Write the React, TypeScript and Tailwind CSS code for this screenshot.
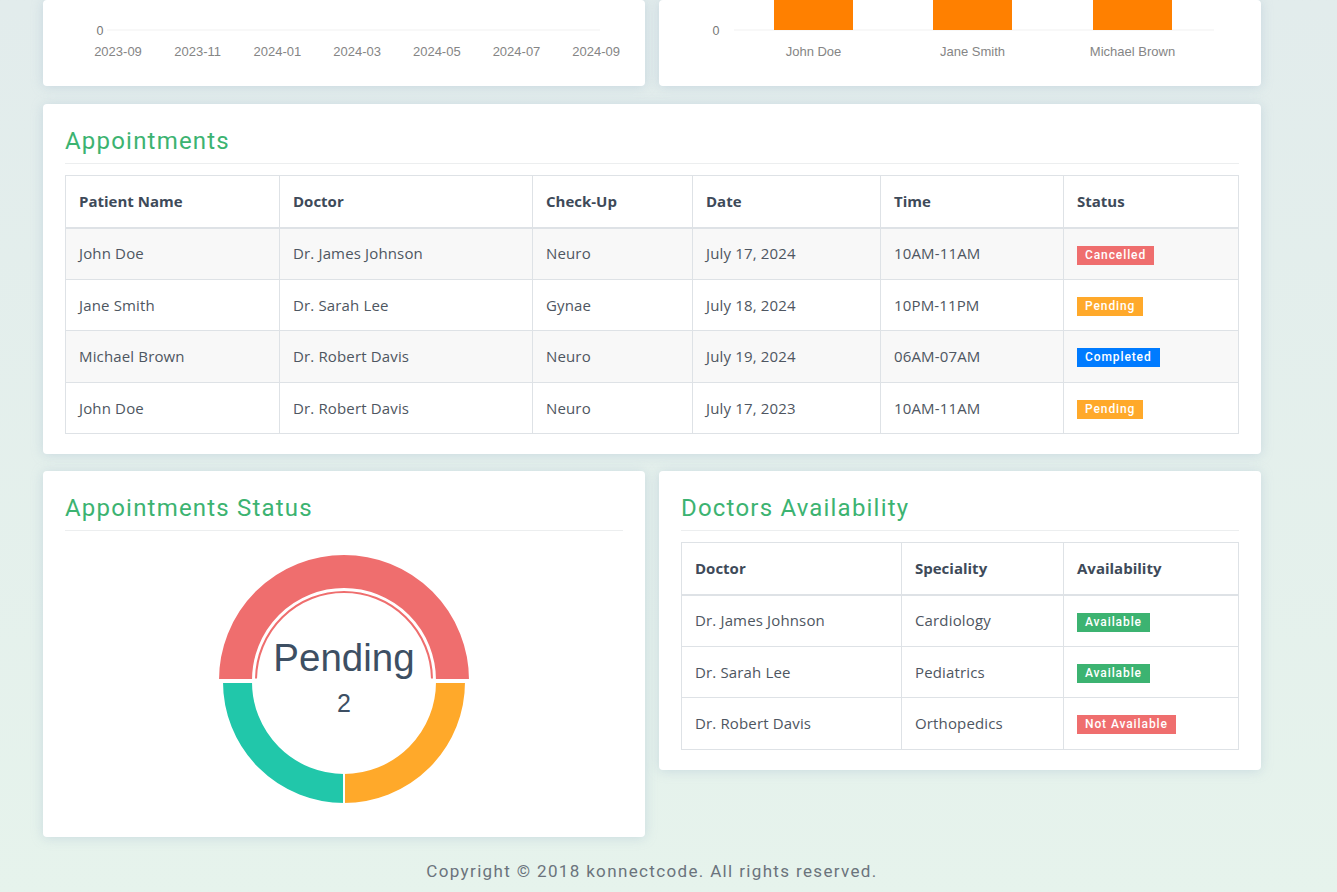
import React from "react";

const card = "bg-white rounded-[4px] shadow-[0_1px_12px_rgba(150,175,200,0.35)]";
const titleCls =
  "text-[24px] leading-[34px] pb-[5px] border-b border-[#eceeef] text-[#3cb371] tracking-[1.2px] font-['Roboto',sans-serif]";

type Appt = { patient: string; doctor: string; check: string; date: string; time: string; status: string };

const appts: Appt[] = [
  { patient: "John Doe", doctor: "Dr. James Johnson", check: "Neuro", date: "July 17, 2024", time: "10AM-11AM", status: "Cancelled" },
  { patient: "Jane Smith", doctor: "Dr. Sarah Lee", check: "Gynae", date: "July 18, 2024", time: "10PM-11PM", status: "Pending" },
  { patient: "Michael Brown", doctor: "Dr. Robert Davis", check: "Neuro", date: "July 19, 2024", time: "06AM-07AM", status: "Completed" },
  { patient: "John Doe", doctor: "Dr. Robert Davis", check: "Neuro", date: "July 17, 2023", time: "10AM-11AM", status: "Pending" }
];

const doctors = [
  { name: "Dr. James Johnson", spec: "Cardiology", avail: "Available" },
  { name: "Dr. Sarah Lee", spec: "Pediatrics", avail: "Available" },
  { name: "Dr. Robert Davis", spec: "Orthopedics", avail: "Not Available" }
];

const badgeColor: Record<string, string> = {
  Cancelled: "bg-[#ef6e6e]",
  Pending: "bg-[#ffa92a]",
  Completed: "bg-[#007bff]",
  Available: "bg-[#3cb371]",
  "Not Available": "bg-[#ef6e6e]"
};

const Badge = ({ label }: { label: string }) => (
  <span
    className={`inline-block ${badgeColor[label]} text-white text-[12px] leading-[15px] font-medium tracking-[0.9px] px-[8px] py-[2px] font-['Roboto',sans-serif] align-middle`}
  >
    {label}
  </span>
);

const th = "border border-[#dee2e6] border-b-2 px-[13px] h-[52px] text-left font-bold text-[#3e4a59]";
const td = "border border-[#dee2e6] px-[13px] h-[51.5px] text-[#4e5661] tracking-[0.15px]";

const axisFont = "Liberation Sans, Arial, sans-serif";

const LineChartTail = () => {
  const labels = ["2023-09", "2023-11", "2024-01", "2024-03", "2024-05", "2024-07", "2024-09"];
  return (
    <svg width="602" height="86" className="block">
      <line x1="64" y1="30" x2="557" y2="30" stroke="#f1f1f1" strokeWidth="1" />
      <text x="57" y="34.5" textAnchor="middle" fontSize="12.5" fill="#777" fontFamily={axisFont}>0</text>
      {labels.map((l, i) => (
        <text key={l} x={75 + i * 79.7} y="55.5" textAnchor="middle" fontSize="13" fill="#858585" fontFamily={axisFont}>
          {l}
        </text>
      ))}
    </svg>
  );
};

const BarChartTail = () => {
  const bars = [
    { name: "John Doe", x: 115 },
    { name: "Jane Smith", x: 274 },
    { name: "Michael Brown", x: 434 }
  ];
  return (
    <svg width="602" height="86" className="block">
      <line x1="75" y1="30" x2="555" y2="30" stroke="#f1f1f1" strokeWidth="1" />
      {bars.map((b) => (
        <rect key={b.name} x={b.x} y="0" width="79" height="30" fill="#ff8000" />
      ))}
      <text x="57" y="34.5" textAnchor="middle" fontSize="12.5" fill="#777" fontFamily={axisFont}>0</text>
      {bars.map((b) => (
        <text key={b.name} x={b.x + 39.5} y="55.5" textAnchor="middle" fontSize="13" fill="#858585" fontFamily={axisFont}>
          {b.name}
        </text>
      ))}
    </svg>
  );
};

function pt(cx: number, cy: number, r: number, deg: number) {
  const a = (deg * Math.PI) / 180;
  return [cx + r * Math.sin(a), cy - r * Math.cos(a)];
}

function arc(cx: number, cy: number, ro: number, ri: number, s: number, e: number) {
  const large = e - s > 180 ? 1 : 0;
  const [x1, y1] = pt(cx, cy, ro, s);
  const [x2, y2] = pt(cx, cy, ro, e);
  const [x3, y3] = pt(cx, cy, ri, e);
  const [x4, y4] = pt(cx, cy, ri, s);
  return `M${x1} ${y1} A${ro} ${ro} 0 ${large} 1 ${x2} ${y2} L${x3} ${y3} A${ri} ${ri} 0 ${large} 0 ${x4} ${y4} Z`;
}

const Donut = () => {
  const cx = 140;
  const cy = 141;
  const [ax, ay] = pt(cx, cy - 2, 88, -89);
  const [bx, by] = pt(cx, cy - 2, 88, 89);
  return (
    <svg width="280" height="280" className="block mx-auto">
      <path d={arc(cx, cy, 122, 91, 90, 180)} fill="#ffa92a" stroke="#fff" strokeWidth="2" />
      <path d={arc(cx, cy, 122, 91, 180, 270)} fill="#21c7aa" stroke="#fff" strokeWidth="2" />
      <path d={arc(cx, cy - 2, 126, 91, -90, 90)} fill="#ef6e6e" stroke="#fff" strokeWidth="2" />
      <path d={`M${ax} ${ay} A88 88 0 0 1 ${bx} ${by}`} fill="none" stroke="#ef6e6e" strokeWidth="2" />
      <text x={cx} y="130" textAnchor="middle" fontSize="38.5" fill="#3d4f63" fontFamily={axisFont}>
        Pending
      </text>
      <text x={cx} y="171" textAnchor="middle" fontSize="25" fill="#3d4f63" fontFamily={axisFont}>
        2
      </text>
    </svg>
  );
};

export default function App() {
  return (
    <div className="min-h-[892px] bg-gradient-to-b from-[#e2ecec] to-[#e6f3ec] pl-[43px] font-['Open_Sans',sans-serif]">
      <div className="w-[1218px]">
        <div className="grid grid-cols-2 gap-[14px] h-[86px] mb-[18px]">
          <div className={card}>
            <LineChartTail />
          </div>
          <div className={card}>
            <BarChartTail />
          </div>
        </div>

        <div className={`${card} px-[22px] pt-[20px] pb-[20px] mb-[17px]`}>
          <div className={titleCls}>Appointments</div>
          <table className="w-full mt-[11px] border-collapse table-fixed text-[15px]">
            <thead>
              <tr>
                <th className={`${th} w-[214px]`}>Patient Name</th>
                <th className={`${th} w-[253px]`}>Doctor</th>
                <th className={`${th} w-[160px]`}>Check-Up</th>
                <th className={`${th} w-[188px]`}>Date</th>
                <th className={`${th} w-[183px]`}>Time</th>
                <th className={th}>Status</th>
              </tr>
            </thead>
            <tbody>
              {appts.map((a, i) => (
                <tr key={i} className={i % 2 === 0 ? "bg-[#f8f8f8]" : "bg-white"}>
                  <td className={td}>{a.patient}</td>
                  <td className={td}>{a.doctor}</td>
                  <td className={td}>{a.check}</td>
                  <td className={td}>{a.date}</td>
                  <td className={td}>{a.time}</td>
                  <td className={td}>
                    <Badge label={a.status} />
                  </td>
                </tr>
              ))}
            </tbody>
          </table>
        </div>

        <div className="grid grid-cols-2 gap-[14px] items-start">
          <div className={`${card} px-[22px] pt-[20px] pb-[16px]`}>
            <div className={titleCls}>Appointments Status</div>
            <div className="mt-[10px]">
              <Donut />
            </div>
          </div>
          <div className={`${card} px-[22px] pt-[20px] pb-[20px]`}>
            <div className={titleCls}>Doctors Availability</div>
            <table className="w-full mt-[11px] border-collapse table-fixed text-[15px]">
              <thead>
                <tr>
                  <th className={`${th} w-[220px]`}>Doctor</th>
                  <th className={`${th} w-[162px]`}>Speciality</th>
                  <th className={th}>Availability</th>
                </tr>
              </thead>
              <tbody>
                {doctors.map((d) => (
                  <tr key={d.name}>
                    <td className={td}>{d.name}</td>
                    <td className={td}>{d.spec}</td>
                    <td className={td}>
                      <Badge label={d.avail} />
                    </td>
                  </tr>
                ))}
              </tbody>
            </table>
          </div>
        </div>

        <div className="mt-[22px] pb-[9px] text-center text-[17px] leading-[24px] tracking-[1.35px] text-[#6b737c] font-['Roboto',sans-serif]">
          Copyright © 2018 konnectcode. All rights reserved.
        </div>
      </div>
    </div>
  );
}
